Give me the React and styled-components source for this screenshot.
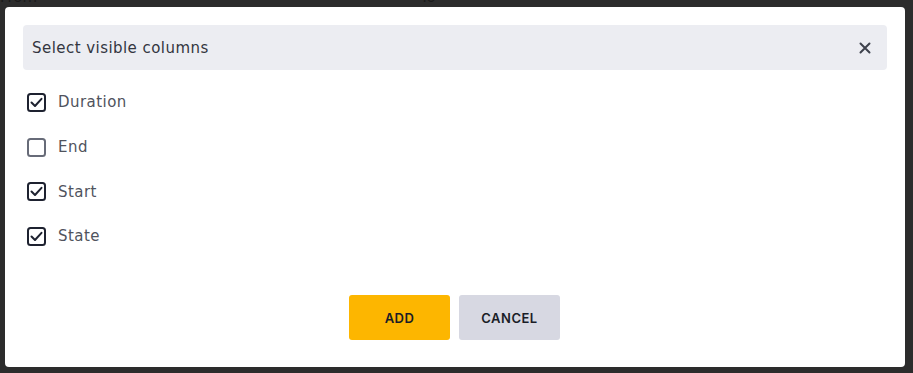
import React, { useState } from 'react';
import styled, { createGlobalStyle } from 'styled-components';

const GlobalStyle = createGlobalStyle`
  html, body {
    margin: 0;
    padding: 0;
    background: #2c2c2c;
  }
  body {
    font-family: "DejaVu Sans", "Noto Sans", sans-serif;
  }
`;

const Screen = styled.div`
  position: relative;
  width: 913px;
  height: 373px;
  overflow: hidden;
  background: #2c2c2c;
`;

const BackPage = styled.div`
  display: grid;
  grid-template-columns: 420px 1fr;
  margin-top: -12px;
  color: #1a1a1a;
  font-size: 15px;
`;

const BackLabel = styled.span`
  padding-left: ${(p) => p.$indent || 0}px;
`;

const Overlay = styled.div`
  position: absolute;
  inset: 0;
  padding: 7px 8px 6px 5px;
  box-sizing: border-box;
`;

const Modal = styled.div`
  height: 100%;
  background: #ffffff;
  border-radius: 4px;
  padding: 18px 18px 27px 18px;
  box-sizing: border-box;
  display: flex;
  flex-direction: column;
`;

const Header = styled.div`
  display: flex;
  align-items: center;
  justify-content: space-between;
  height: 45px;
  background: #ecedf2;
  border-radius: 4px;
  padding: 0 16px 0 9px;
`;

const Title = styled.h2`
  margin: 0;
  font-size: 15px;
  font-weight: 400;
  letter-spacing: 0.45px;
  color: #33363f;
`;

const CloseButton = styled.button`
  border: none;
  background: none;
  padding: 0;
  display: flex;
  cursor: pointer;
  color: #3e424d;
`;

const List = styled.div`
  display: flex;
  flex-direction: column;
  padding: 10px 0 0 4px;
`;

const Row = styled.label`
  display: flex;
  align-items: center;
  gap: 12px;
  height: 44.7px;
  cursor: pointer;
  font-size: 15px;
  letter-spacing: 0.45px;
  color: #50535d;
`;

const Box = styled.span`
  width: 19px;
  height: 19px;
  box-sizing: border-box;
  border: 2px solid ${(p) => (p.$checked ? '#1e2230' : '#676b78')};
  border-radius: 3.5px;
  display: flex;
  align-items: center;
  justify-content: center;
`;

const Actions = styled.div`
  margin-top: auto;
  display: flex;
  justify-content: center;
  gap: 9px;
  padding-right: 1px;
`;

const Button = styled.button`
  width: 101px;
  height: 45px;
  border: none;
  border-radius: 3px;
  background: ${(p) => (p.$primary ? '#fdb600' : '#d7d8e2')};
  color: #1a1d27;
  font-family: Inter, "DejaVu Sans", sans-serif;
  font-size: 13px;
  font-weight: 600;
  letter-spacing: 0.5px;
  cursor: pointer;
`;

const columns = ['Duration', 'End', 'Start', 'State'];

const App = () => {
  const [visible, setVisible] = useState({ Duration: true, End: false, Start: true, State: true });

  const toggle = (name) => setVisible((v) => ({ ...v, [name]: !v[name] }));

  return (
    <Screen>
      <GlobalStyle />
      <BackPage>
        <BackLabel $indent={0}>From</BackLabel>
        <BackLabel>To</BackLabel>
      </BackPage>
      <Overlay>
        <Modal>
          <Header>
            <Title>Select visible columns</Title>
            <CloseButton aria-label="Close">
              <svg width="12" height="12" viewBox="0 0 12 12">
                <path d="M1.5 1.5 L10.5 10.5 M10.5 1.5 L1.5 10.5" stroke="currentColor" strokeWidth="2" strokeLinecap="round" />
              </svg>
            </CloseButton>
          </Header>
          <List>
            {columns.map((c) => (
              <Row key={c} onClick={() => toggle(c)}>
                <Box $checked={visible[c]}>
                  {visible[c] && (
                    <svg width="13" height="11" viewBox="0 0 13 11">
                      <path d="M1.5 5.5 L5 9 L11.5 1.8" fill="none" stroke="#1e2230" strokeWidth="2" strokeLinecap="round" strokeLinejoin="round" />
                    </svg>
                  )}
                </Box>
                {c}
              </Row>
            ))}
          </List>
          <Actions>
            <Button $primary>ADD</Button>
            <Button>CANCEL</Button>
          </Actions>
        </Modal>
      </Overlay>
    </Screen>
  );
};

export default App;
